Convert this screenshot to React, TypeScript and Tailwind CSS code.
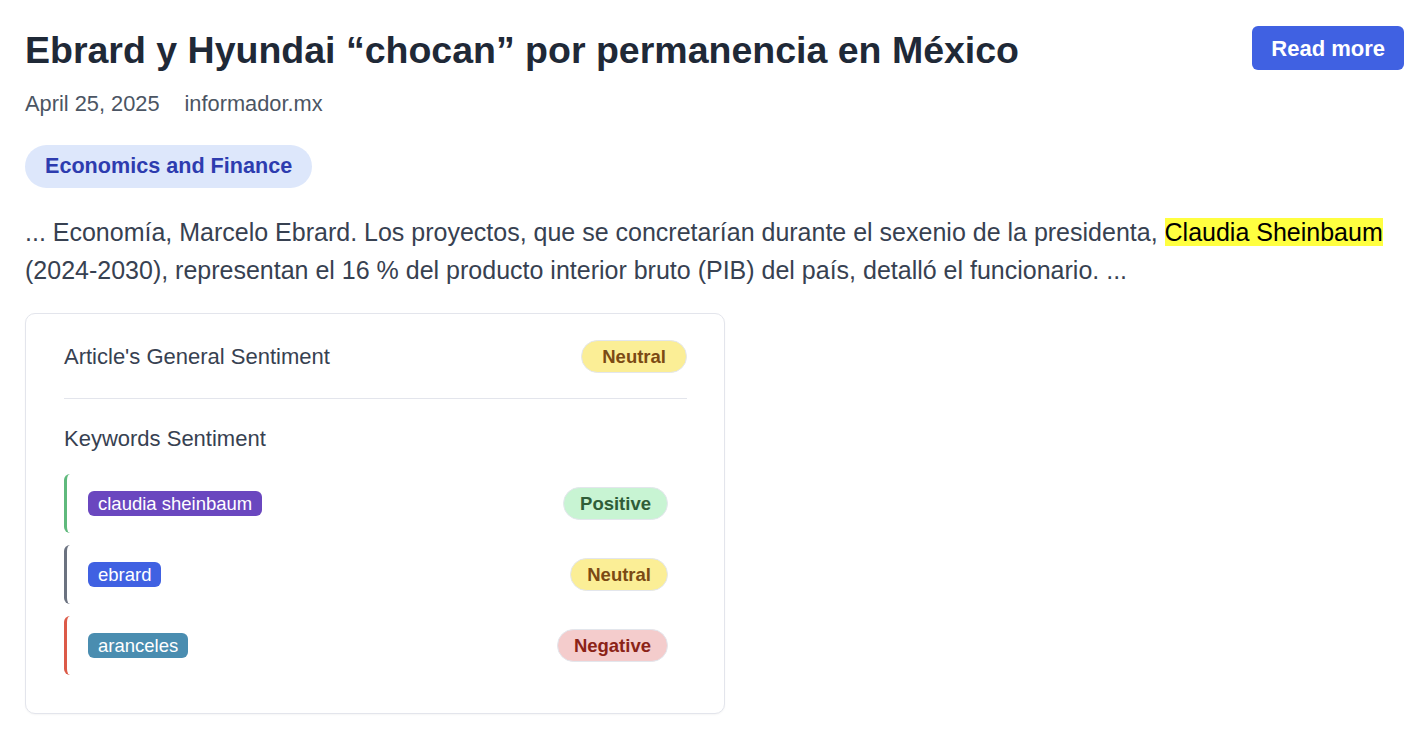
import type { ReactNode } from "react";

type Sentiment = "Positive" | "Neutral" | "Negative";

const badgeStyles: Record<Sentiment, string> = {
    Positive: "bg-[#c8f4d3] text-[#2f5d38]",
    Neutral: "bg-[#fbee96] text-[#7b4a14]",
    Negative: "bg-[#f4cccc] text-[#8b2317]",
};

const rowBorders: Record<Sentiment, string> = {
    Positive: "border-[#5fb97c]",
    Neutral: "border-[#6b7280]",
    Negative: "border-[#dc5a48]",
};

const keywords: { label: string; tag: string; sentiment: Sentiment }[] = [
    { label: "claudia sheinbaum", tag: "bg-[#6a47bf]", sentiment: "Positive" },
    { label: "ebrard", tag: "bg-[#4061e2]", sentiment: "Neutral" },
    { label: "aranceles", tag: "bg-[#4a8db0]", sentiment: "Negative" },
];

const SentimentBadge = ({ value, wide }: { value: Sentiment; wide?: boolean }) => (
    <span
        className={`inline-flex h-[33px] items-center rounded-full border border-[#e3e6ec] text-[18.5px] font-bold ${wide ? "px-[20px]" : "px-[16px]"} ${badgeStyles[value]}`}
    >
        {value}
    </span>
);

const Highlight = ({ children }: { children: ReactNode }) => (
    <mark className="bg-[#ffff40] text-black">{children}</mark>
);

export default function App() {
    return (
        <div className="min-h-screen bg-white px-[25px] pt-[26px] pb-6 font-['Liberation_Sans',Arial,sans-serif]">
            <div className="flex items-start justify-between gap-6">
                <h1 className="mt-[2px] text-[37.5px] leading-[45px] font-bold text-[#1f2937]">
                    Ebrard y Hyundai “chocan” por permanencia en México
                </h1>
                <button className="mr-[-2px] h-[44px] shrink-0 rounded-md bg-[#4061e2] px-[19px] text-[22px] font-bold text-white">
                    Read more
                </button>
            </div>

            <div className="mt-[16px] flex gap-[25px] text-[21.8px] leading-[30px] text-[#4b5563]">
                <span>April 25, 2025</span>
                <span>informador.mx</span>
            </div>

            <div className="mt-[26px]">
                <span className="inline-flex h-[43px] items-center rounded-full bg-[#dde7fb] px-[20px] text-[21.6px] font-bold text-[#2d3caf]">
                    Economics and Finance
                </span>
            </div>

            <p className="mt-[25px] text-[25px] leading-[38px] text-[#374151]">
                ... Economía, Marcelo Ebrard. Los proyectos, que se concretarían durante el sexenio de la presidenta,{" "}
                <Highlight>Claudia Sheinbaum</Highlight> (2024-2030), representan el 16 % del producto interior bruto (PIB) del país, detalló el funcionario. ...
            </p>

            <div className="mt-[24px] w-[700px] rounded-[10px] border border-[#e3e5ec] bg-white pt-[26px] pr-[37px] pb-[38px] pl-[38px] shadow-[0_1px_2px_rgba(0,0,0,0.04)]">
                <div className="flex items-center justify-between">
                    <span className="text-[22px] text-[#374151]">Article's General Sentiment</span>
                    <SentimentBadge value="Neutral" wide />
                </div>

                <div className="mt-[25px] border-t border-[#e3e5ec]" />

                <div className="mt-[25px] text-[22px] leading-[30px] text-[#374151]">Keywords Sentiment</div>

                <div className="mt-[20px] flex flex-col gap-[12px]">
                    {keywords.map((k) => (
                        <div
                            key={k.label}
                            className={`flex h-[59px] items-center justify-between rounded-md border-l-[3px] pr-[19px] pl-[21px] ${rowBorders[k.sentiment]}`}
                        >
                            <span className={`rounded-md px-[10px] text-[18.5px] leading-[25px] text-white ${k.tag}`}>{k.label}</span>
                            <SentimentBadge value={k.sentiment} />
                        </div>
                    ))}
                </div>
            </div>
        </div>
    );
}
